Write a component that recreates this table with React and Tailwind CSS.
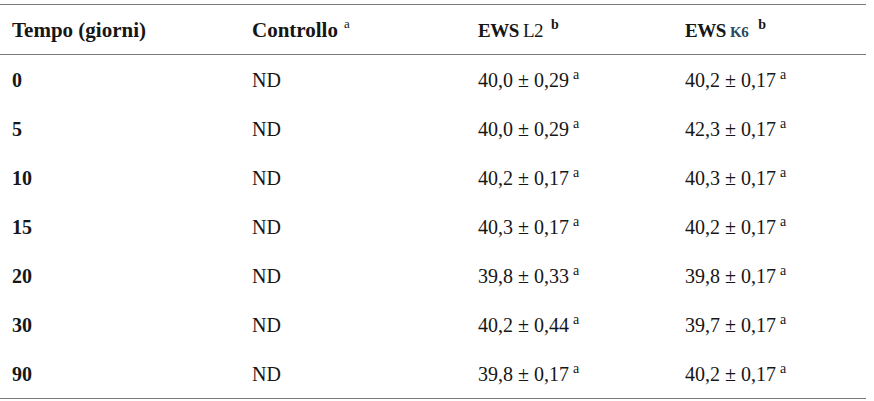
import React from 'react';

const rows = [
  ['0', 'ND', '40,0 ± 0,29', '40,2 ± 0,17'],
  ['5', 'ND', '40,0 ± 0,29', '42,3 ± 0,17'],
  ['10', 'ND', '40,2 ± 0,17', '40,3 ± 0,17'],
  ['15', 'ND', '40,3 ± 0,17', '40,2 ± 0,17'],
  ['20', 'ND', '39,8 ± 0,33', '39,8 ± 0,17'],
  ['30', 'ND', '40,2 ± 0,44', '39,7 ± 0,17'],
  ['90', 'ND', '39,8 ± 0,17', '40,2 ± 0,17'],
];

const cols = 'grid grid-cols-[240px_226px_207px_1fr] pl-3 items-center';

const Sup = ({ children, className = '' }) => (
  <span className={`relative -top-[8px] text-[14px] ml-[4px] ${className}`}>{children}</span>
);

export default function App() {
  return (
    <div className="w-[874px] h-[401px] bg-white pt-[4px] text-[#161616]" style={{ fontFamily: '"Liberation Serif", serif' }}>
      <div className="w-[866px] border-t border-b border-[#7a7a7a]">
        {/* intestazione */}
        <div className={`${cols} h-[50px] border-b border-[#7a7a7a] font-bold`}>
          <div className="text-[21px] leading-none pt-[2px]">Tempo (giorni)</div>
          <div className="text-[21px] leading-none pt-[2px]">
            Controllo<span className="relative -top-[9px] ml-[6px] text-[13px] font-normal">a</span>
          </div>
          <div className="text-[19px] leading-none tracking-[-0.5px] pt-[2px]">
            EWS <span className="font-normal">L2</span><Sup className="ml-[8px] font-bold">b</Sup>
          </div>
          <div className="text-[19px] leading-none tracking-[-0.5px] pt-[2px]">
            EWS <span className="text-[15px] text-[#274a5c]">K6</span><Sup className="ml-[10px] font-bold">b</Sup>
          </div>
        </div>

        {/* righe dati */}
        {rows.map((r) => (
          <div key={r[0]} className={`${cols} h-[49px] text-[20px] leading-none`}>
            <div className="font-bold">{r[0]}</div>
            <div>{r[1]}</div>
            <div>{r[2]}<Sup>a</Sup></div>
            <div>{r[3]}<Sup>a</Sup></div>
          </div>
        ))}
      </div>
    </div>
  );
}
